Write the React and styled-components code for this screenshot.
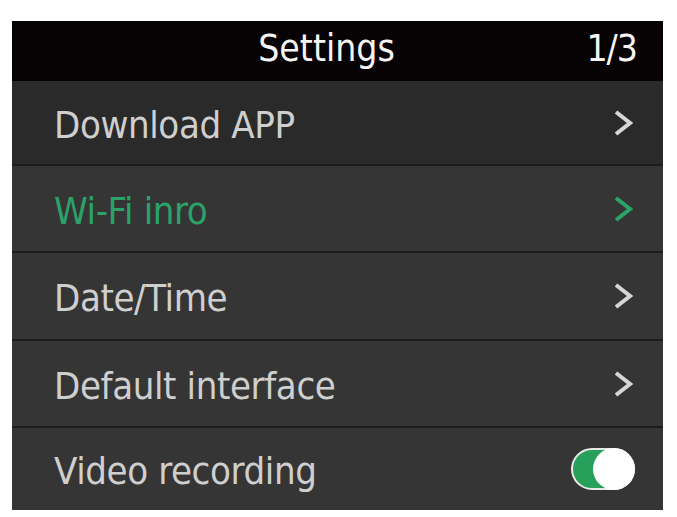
import React from "react";
import styled, { createGlobalStyle } from "styled-components";

const GlobalStyle = createGlobalStyle`
  body {
    margin: 0;
    background: #ffffff;
    font-family: "DejaVu Sans Condensed", "Liberation Sans", sans-serif;
  }
`;

const Screen = styled.div`
  width: 651px;
  margin: 21px 0 0 12px;
  display: flex;
  flex-direction: column;
`;

const Header = styled.div`
  height: 60px;
  box-sizing: border-box;
  background: #070203;
  color: #f4f4f4;
  display: grid;
  grid-template-columns: 1fr auto 1fr;
  align-items: center;
  padding: 0 26px 5px 0;
  font-size: 37px;
`;

const Title = styled.div`
  grid-column: 2;
  margin-left: 4px;
`;

const Page = styled.div`
  grid-column: 3;
  justify-self: end;
  letter-spacing: -1px;
`;

const Row = styled.div`
  height: ${p => p.$h}px;
  box-sizing: border-box;
  background: ${p => (p.$dark ? "#2a2a2a" : "#353535")};
  border-top: ${p => (p.$first ? "none" : "2px solid #1c1c1c")};
  display: flex;
  align-items: center;
  justify-content: space-between;
  padding: 4px 30px 0 42px;
  color: ${p => (p.$active ? "#2aa268" : "#cfcfcf")};
  font-size: 38px;
  letter-spacing: -0.4px;
`;

const Label = styled.span`
  line-height: 1;
`;

const Toggle = styled.div`
  width: 64px;
  height: 42px;
  border-radius: 21px;
  background: #27a05c;
  border: 2px solid #e8e8e8;
  box-sizing: border-box;
  display: flex;
  justify-content: flex-end;
  margin: -4px -2px 0 0;
`;

const Knob = styled.div`
  width: 42px;
  height: 42px;
  margin: -2px -2px 0 0;
  border-radius: 50%;
  background: #ffffff;
`;

const Chevron = ({ color }) => (
  <svg width="20" height="28" viewBox="0 0 20 28" style={{ marginTop: -4 }}>
    <polyline
      points="3,3 17,14 3,25"
      fill="none"
      stroke={color}
      strokeWidth="4"
      strokeLinejoin="miter"
    />
  </svg>
);

const items = [
  { label: "Download APP", h: 83, dark: true, first: true },
  { label: "Wi-Fi inro", h: 87, active: true },
  { label: "Date/Time", h: 88 },
  { label: "Default interface", h: 87 },
  { label: "Video recording", h: 84, toggle: true },
];

export default function App() {
  return (
    <>
      <GlobalStyle />
      <Screen>
        <Header>
          <Title>Settings</Title>
          <Page>1/3</Page>
        </Header>
        {items.map(item => (
          <Row
            key={item.label}
            $h={item.h}
            $dark={item.dark}
            $first={item.first}
            $active={item.active}
          >
            <Label>{item.label}</Label>
            {item.toggle ? (
              <Toggle>
                <Knob />
              </Toggle>
            ) : (
              <Chevron color={item.active ? "#2aa268" : "#d6d6d6"} />
            )}
          </Row>
        ))}
      </Screen>
    </>
  );
}
